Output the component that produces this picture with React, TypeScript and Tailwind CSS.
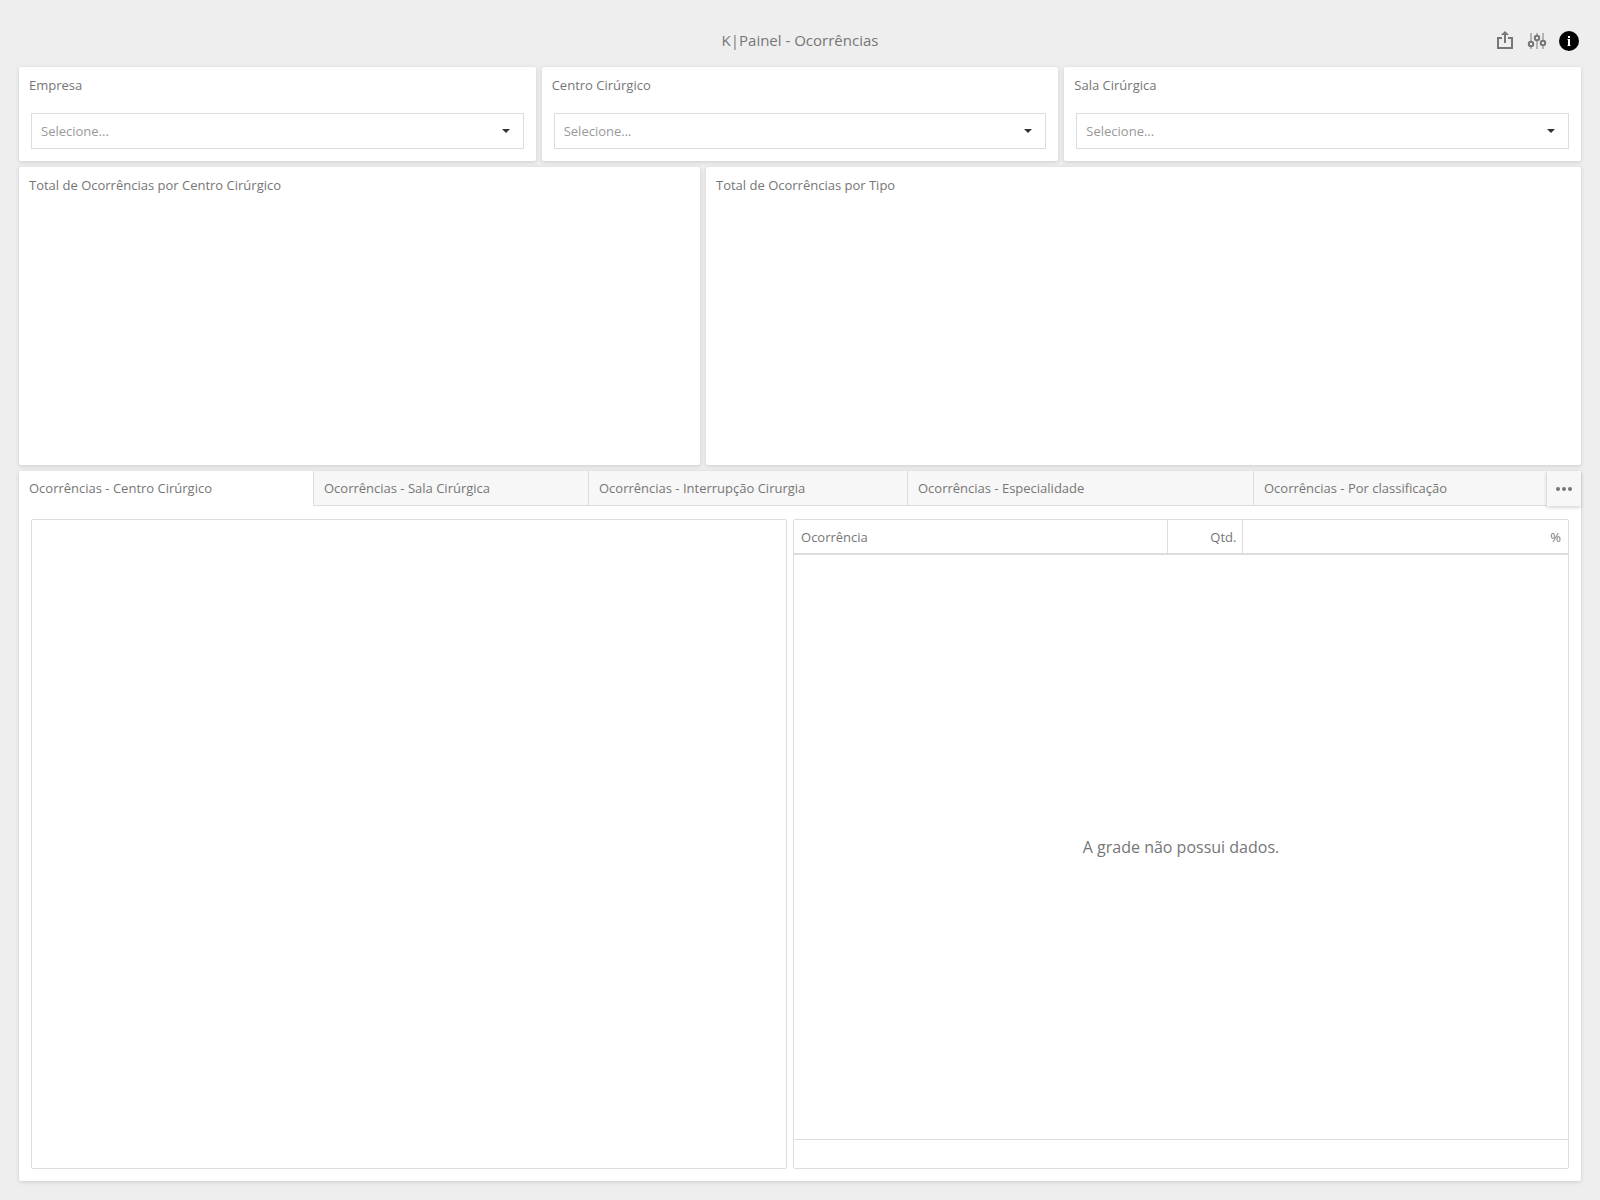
import React, { useState } from 'react';

const FILTERS = [
  { id: 'empresa', label: 'Empresa' },
  { id: 'centro-cirurgico', label: 'Centro Cirúrgico' },
  { id: 'sala-cirurgica', label: 'Sala Cirúrgica' },
];

const TABS = [
  { label: 'Ocorrências - Centro Cirúrgico', size: 'flex-[274]' },
  { label: 'Ocorrências - Sala Cirúrgica', size: 'flex-[254]' },
  { label: 'Ocorrências - Interrupção Cirurgia', size: 'flex-[298]' },
  { label: 'Ocorrências - Especialidade', size: 'flex-[325]' },
  { label: 'Ocorrências - Por classificação', size: 'flex-[272]' },
];

const CARD = 'bg-white rounded-xs shadow-[0_1px_4px_rgba(0,0,0,0.15)]';

function ExportIcon() {
  return (
    <svg width="20" height="20" viewBox="0 0 20 20" fill="none" aria-hidden="true">
      <path d="M7 7H3v10h14V7h-4" stroke="#767676" strokeWidth="2" />
      <path d="M10 12V3" stroke="#767676" strokeWidth="2" />
      <path d="M10 0l4 4H6z" fill="#767676" />
    </svg>
  );
}

function ParametersIcon() {
  return (
    <svg width="20" height="20" viewBox="0 0 20 20" fill="none" aria-hidden="true">
      <path d="M4 2v16M10 2v16M16 2v16" stroke="#b4b4b4" strokeWidth="2" />
      <g fill="#eee" stroke="#767676" strokeWidth="2">
        <circle cx="4" cy="13" r="2.2" />
        <circle cx="10" cy="7" r="2.2" />
        <circle cx="16" cy="12" r="2.2" />
      </g>
    </svg>
  );
}

function InfoIcon() {
  return (
    <svg width="20" height="20" viewBox="0 0 20 20" aria-hidden="true">
      <circle cx="10" cy="10" r="10" fill="#000" />
      <path d="M9 5h2v2H9zM9 8h2v7H9z" fill="#fff" />
      <path d="M8 8h1v1H8zM8 14h1v1H8zM11 14h1v1h-1z" fill="#777" />
    </svg>
  );
}

function FilterCard({ id, label }: { id: string; label: string }) {
  return (
    <div className={`${CARD} flex-1 px-3 pb-3`}>
      <label htmlFor={id} className="-ml-0.5 flex h-[34px] items-center pt-0.5">{label}</label>
      <div className="relative mt-3">
        <select id={id} defaultValue="" className="block h-9 w-full appearance-none border border-[#ddd] bg-white px-[9px] text-[#999] outline-none focus:border-[#5f8b95]">
          <option value="">Selecione...</option>
        </select>
        <svg className="pointer-events-none absolute right-3.5 top-4" width="8" height="4" viewBox="0 0 8 4" aria-hidden="true">
          <path d="M0 0h8L4 4z" fill="#333" />
        </svg>
      </div>
    </div>
  );
}

export default function App() {
  const [activeTab, setActiveTab] = useState(0);

  return (
    <div className="flex min-h-screen flex-col bg-[#eee] px-[19px] pb-[19px] pt-3.5 font-['Segoe_UI','Open_Sans',sans-serif] text-[13px] leading-5 text-[#767676]">
      <header className="grid h-[53px] grid-cols-[1fr_auto_1fr] items-center">
        <h1 className="col-start-2 pb-0.5 text-[15px]">K|Painel - Ocorrências</h1>
        <div className="flex items-center justify-end gap-3 pr-0.5">
          <button type="button" aria-label="Exportar"><ExportIcon /></button>
          <button type="button" aria-label="Parâmetros"><ParametersIcon /></button>
          <button type="button" aria-label="Informações"><InfoIcon /></button>
        </div>
      </header>

      <main className="flex flex-1 flex-col gap-1.5">
        <div className="flex gap-1.5">
          {FILTERS.map((f) => <FilterCard key={f.id} id={f.id} label={f.label} />)}
        </div>

        <div className="flex h-[298px] gap-1.5">
          <section className={`${CARD} flex-[661] px-2.5 pt-2`}>
            <h2>Total de Ocorrências por Centro Cirúrgico</h2>
          </section>
          <section className={`${CARD} flex-[855] px-2.5 pt-2`}>
            <h2>Total de Ocorrências por Tipo</h2>
          </section>
        </div>

        <section className={`${CARD} flex flex-1 flex-col`}>
          <div className="flex h-[35px]">
            <div role="tablist" className="flex flex-1">
              {TABS.map((tab, i) => (
                <button
                  key={tab.label}
                  type="button"
                  role="tab"
                  aria-selected={i === activeTab}
                  onClick={() => setActiveTab(i)}
                  className={`${tab.size} truncate border-b px-2.5 text-left ${i > 0 ? 'border-l border-l-[#ddd]' : ''} ${i === activeTab ? 'border-b-white bg-white' : 'border-b-[#ddd] bg-[#f7f7f7]'}`}
                >
                  {tab.label}
                </button>
              ))}
            </div>
            <button type="button" aria-label="Mais abas" className="flex w-[35px] items-center justify-center border-l border-[#ddd] bg-[#f7f7f7] shadow-[0_2px_3px_rgba(0,0,0,0.15)]">
              <svg width="16" height="4" viewBox="0 0 16 4" fill="#767676" aria-hidden="true">
                <circle cx="2" cy="2" r="2" />
                <circle cx="8" cy="2" r="2" />
                <circle cx="14" cy="2" r="2" />
              </svg>
            </button>
          </div>

          <div className="flex flex-1 gap-1.5 px-3 pb-3 pt-[13px]">
            <div className="flex-[756] rounded-xs border border-[#ddd]" />
            <div className="flex flex-[776] flex-col rounded-xs border border-[#ddd]">
              <table className="w-full table-fixed border-b-2 border-[#ddd]">
                <thead>
                  <tr className="h-[34px]">
                    <th scope="col" className="border-r border-[#ddd] px-[7px] text-left font-normal">Ocorrência</th>
                    <th scope="col" className="w-[75px] border-r border-[#ddd] px-1.5 text-right font-normal">Qtd.</th>
                    <th scope="col" className="w-[42%] px-[7px] text-right font-normal">%</th>
                  </tr>
                </thead>
              </table>
              <div className="flex flex-1 items-center justify-center text-base">A grade não possui dados.</div>
              <div className="h-[29px] border-t border-[#ddd]" />
            </div>
          </div>
        </section>
      </main>
    </div>
  );
}
